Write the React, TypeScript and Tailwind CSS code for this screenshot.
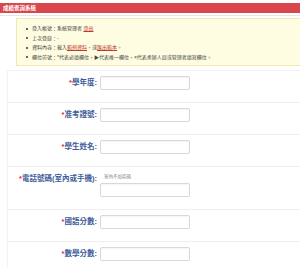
import React from "react";

const FONT = { fontFamily: '"Liberation Sans", "Noto Sans CJK TC", sans-serif' };

function Row({
  label,
  hint,
  last,
}: {
  label: string;
  hint?: string;
  last?: boolean;
}) {
  return (
    <div className={`flex border-b border-[#efefef] pt-[5px] pb-[12px] ${last ? "" : ""}`}>
      <div className="w-[90px] pr-[1px] text-right text-[7.5px] leading-[14px] font-bold text-[#3d5c98]">
        <span className="text-[#e0282e]">*</span>
        {label}:
      </div>
      <div className="flex flex-col pl-[2px]">
        {hint && (
          <div className="h-[11px] pl-[4px] text-[4.5px] leading-[10px] text-[#888]">{hint}</div>
        )}
        <div className="h-[14px] w-[90px] rounded-[2px] border border-[#d8d8d8] bg-white shadow-[inset_0_1px_1px_rgba(0,0,0,0.04)]" />
      </div>
    </div>
  );
}

function Bullet({ children }: { children: React.ReactNode }) {
  return (
    <div className="flex items-center h-[9.5px]">
      <span className="inline-block h-[2px] w-[2px] rounded-full bg-[#333]" />
      <span className="ml-[4px] whitespace-nowrap text-[5px] leading-[9.5px] text-[#444]">{children}</span>
    </div>
  );
}

export default function App() {
  return (
    <div className="w-[300px] h-[267px] overflow-hidden bg-white" style={FONT}>
      <div className="pt-[3px]">
        <div className="h-[10px] bg-[#d9464c] pl-[3px] text-[5.5px] leading-[10px] font-bold text-white">
          成績查詢系統
        </div>
        <div className="h-[2px]" />
        <div className="h-[1px] bg-[#e6e6e6]" />
      </div>
      <div className="ml-[16px] mt-[2px] h-[48px] border border-r-0 border-[#efe9b8] bg-[#fefde2] pl-[9px] pt-[5px]">
        <Bullet>
          登入帳號：系統管理者 <span className="text-[#c0392b] underline">登出</span>
        </Bullet>
        <Bullet>上次登錄：-</Bullet>
        <Bullet>
          資料內容：載入<span className="text-[#c0392b] underline">範例資料</span>，或
          <span className="text-[#c0392b] underline">匯出範本</span>。
        </Bullet>
        <Bullet>欄位符號：*代表必填欄位，▶代表唯一欄位，×代表承辦人員或管理者填寫欄位。</Bullet>
      </div>
      <div className="ml-[7px] mt-[4px] border-l border-t border-[#f2f2f2]">
        <Row label="學年度" />
        <Row label="准考證號" />
        <Row label="學生姓名" />
        <Row label="電話號碼(室內或手機)" hint="室內不加區碼" />
        <Row label="國語分數" />
        <Row label="數學分數" last />
      </div>
    </div>
  );
}
